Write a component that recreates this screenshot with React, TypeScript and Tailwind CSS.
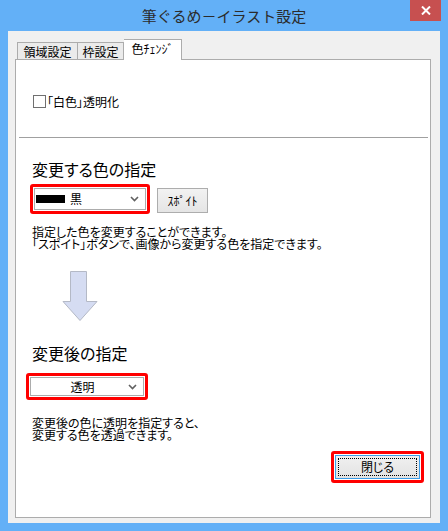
import React from "react";

const font = { fontFamily: '"Noto Sans CJK JP", "Noto Sans", sans-serif' };

const Chevron = () => (
  <svg width="9" height="6" viewBox="0 0 9 6" className="shrink-0">
    <path d="M1 1 L4.5 4.5 L8 1" fill="none" stroke="#606060" strokeWidth="1.6" />
  </svg>
);

const App = () => {
  return (
    <div
      className="w-[448px] h-[531px] bg-[#63b0f7] flex flex-col text-black [font-feature-settings:'palt']"
      style={font}
    >
      {/* title bar */}
      <div className="relative h-[31px] flex items-center justify-center">
        <span className="text-[15px] text-[#2b2b2b] leading-none -mt-[1px] [font-feature-settings:normal]">
          筆ぐるめ－イラスト設定
        </span>
        <div className="absolute right-[7px] top-0 w-[31px] h-[21px] bg-[#c75050] flex items-center justify-center">
          <svg width="10" height="9" viewBox="0 0 10 9">
            <path d="M1 0.5 L9 8.5 M9 0.5 L1 8.5" stroke="#fff" strokeWidth="2" />
          </svg>
        </div>
      </div>

      {/* client area */}
      <div className="mx-[8px] h-[492px] bg-[#f0f0f0] pl-[7px] pr-[9px] pt-[8px] flex flex-col">
        <div className="flex items-end h-[20px] pl-[2px] text-[12px] leading-none">
          <div className="w-[61px] h-[17px] border border-b-0 border-[#acacac] bg-[#ebebeb] flex items-center justify-center pt-[1px]">
            領域設定
          </div>
          <div className="w-[46px] h-[17px] border border-b-0 border-l-0 border-[#acacac] bg-[#ebebeb] flex items-center justify-center pt-[1px]">
            枠設定
          </div>
          <div className="relative z-10 w-[58px] h-[21px] -mb-[1px] border border-b-0 border-l-0 border-[#acacac] bg-white flex justify-center items-start pt-[3px]">
            色ﾁｪﾝｼﾞ
          </div>
        </div>

        <div className="h-[459px] border border-[#acacac] bg-white flex flex-col">
          <label className="flex items-center gap-[1px] mt-[35px] ml-[17px] text-[12px] leading-none">
            <span className="w-[13px] h-[13px] border border-[#707070] bg-white" />
            <span>「白色」透明化</span>
          </label>

          <div className="mt-[29px] ml-[3px] mr-[2px] h-px bg-[#a0a0a0]" />

          <div className="mt-[21px] ml-[16px] text-[16px] leading-[20px]">変更する色の指定</div>

          <div className="mt-[5px] ml-[14px] flex items-center gap-[7px]">
            <div className="w-[120px] h-[30px] border-[3px] border-[#ff0000] rounded-[3px] p-px">
              <div className="h-full border border-[#acacac] bg-white flex items-center pl-[1px] pr-[6px]">
                <span className="w-[29px] h-[8px] bg-black" />
                <span className="ml-[5px] text-[12px] leading-none flex-1">黒</span>
                <Chevron />
              </div>
            </div>
            <div className="w-[51px] h-[25px] mt-[3px] border border-[#adadad] bg-gradient-to-b from-[#f2f2f2] to-[#e5e5e5] flex items-center justify-center text-[12px] leading-none">
              ｽﾎﾟｲﾄ
            </div>
          </div>

          <div className="mt-[12px] ml-[16px] text-[12px] leading-[12px]">
            <div>指定した色を変更することができます。</div>
            <div>「スポイト」ボタンで、画像から変更する色を指定できます。</div>
          </div>

          <div className="mt-[21px] ml-[46px]">
            <svg width="36" height="51" viewBox="0 0 36 51">
              <path
                d="M8.5 0.5 H24.5 V30.5 H35 L18 49.5 L1 30.5 H8.5 Z"
                fill="#d5dcf2"
                stroke="#b4b9c6"
              />
            </svg>
          </div>

          <div className="mt-[21px] ml-[16px] text-[16px] leading-[20px]">変更後の指定</div>

          <div className="mt-[10px] ml-[10px] w-[122px] h-[27px] border-[3px] border-[#ff0000] rounded-[3px] p-px">
            <div className="h-full border border-[#acacac] bg-white flex items-center pr-[6px]">
              <span className="flex-1 text-center text-[12px] leading-none pl-[6px]">透明</span>
              <Chevron />
            </div>
          </div>

          <div className="mt-[17px] ml-[16px] text-[12px] leading-[12px]">
            <div>変更後の色に透明を指定すると、</div>
            <div>変更する色を透過できます。</div>
          </div>

          <div className="mt-[10px] ml-[315px] w-[93px] h-[32px] border-[3px] border-[#ff0000] rounded-[3px] p-px">
            <div className="h-full border border-[#3c9de8] bg-gradient-to-b from-[#f0f0f0] to-[#e3e3e3] p-[2px]">
              <div className="h-full border border-dotted border-black flex items-center justify-center text-[12px] leading-none">
                閉じる
              </div>
            </div>
          </div>
        </div>
      </div>
    </div>
  );
};

export default App;
